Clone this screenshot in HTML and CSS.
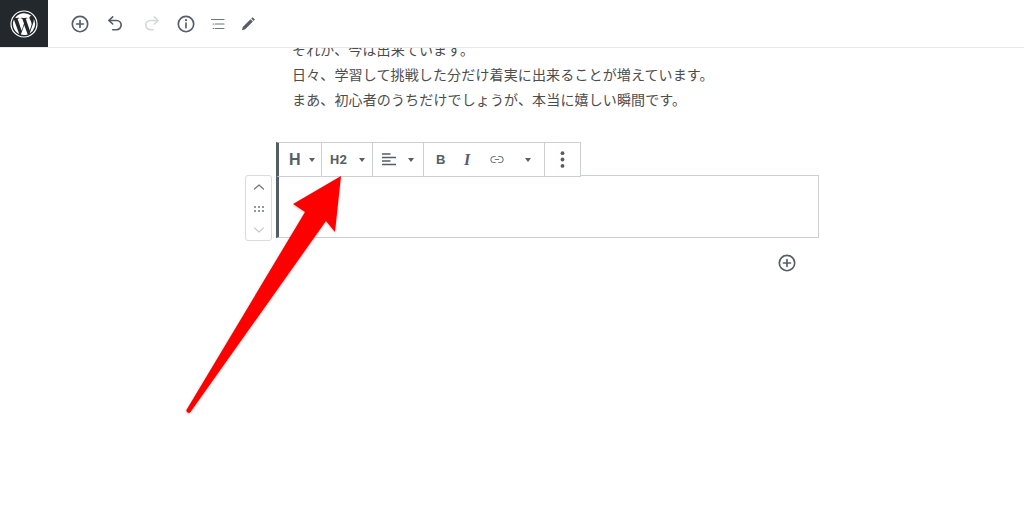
FILE: index.html
```html
<!DOCTYPE html>
<html lang="ja">
<head>
<meta charset="utf-8">
<title>Editor</title>
<link rel="stylesheet" href="styles.css">
</head>
<body>
<header class="topbar">
  <div class="logo">
    <svg viewBox="0 0 28 28" width="28" height="28"><circle cx="14" cy="14" r="13" fill="none" stroke="#fff" stroke-width="1.2"/><path fill="#fff" d="M3 14c0 4.4 2.5 8.100 6.200 9.900L3.900 9.500A11 11 0 0 0 3 14zm18.400-.6c0-1.400-.5-2.300-.9-3-.6-.9-1.100-1.700-1.100-2.600 0-1 .8-2 1.900-2h.1A11 11 0 0 0 5.200 7.900h.7c1.200 0 2.900-.2 2.900-.2.600 0 .7.900.1.900 0 0-.6.100-1.300.1l4 12 2.400-7.300-1.700-4.700c-.6 0-1.200-.1-1.200-.1-.6 0-.5-.9.100-.9 0 0 1.800.2 2.900.2 1.200 0 2.900-.2 2.900-.2.600 0 .7.900.1.900 0 0-.6.100-1.300.1l4 11.800 1.100-3.600c.5-1.500.8-2.500.8-3.500zM14.200 15l-3.300 9.600a11 11 0 0 0 6.800-.2l-.1-.1L14.200 15zm9.500-6.300.1 1.100c0 1.100-.2 2.300-.8 3.900l-3.400 9.700A11 11 0 0 0 23.700 8.700z"/></svg>
  </div>
  <div class="tools">
    <svg class="ico" viewBox="0 0 20 20"><circle cx="10" cy="10" r="7" class="ln"/><path d="M10 6.800v6.400M6.800 10h6.400" class="ln"/></svg>
    <svg class="ico undo" viewBox="0 0 20 20"><path d="M7 3.500 3.500 6.800 7 10" class="ln"/><path d="M4 6.800h6.500a4.200 4.200 0 0 1 0 8.400H7" class="ln"/></svg>
    <svg class="ico off" viewBox="0 0 20 20"><path d="M13 3.500l3.500 3.300L13 10" class="ln"/><path d="M16 6.800H9.500a4.200 4.200 0 0 0 0 8.400H12" class="ln"/></svg>
    <svg class="ico" viewBox="0 0 20 20"><circle cx="10" cy="10" r="7" class="ln"/><path d="M10 9.200v4.300" class="ln"/><circle cx="10" cy="6.500" r="1" class="dot"/></svg>
    <svg class="ico-s" viewBox="0 0 18 18"><path d="M2.500 4.500h12.500M6.500 9H15M6.500 13.500H15" class="thin"/><path d="M4.200 9h.8M4.200 13.500h.8" class="thin"/></svg>
    <svg class="ico-s" viewBox="0 0 18 18"><path class="dot" d="M13.500 2.200l2.400 2.400-1.300 1.300-2.400-2.400zM11.500 4.200l2.400 2.400-7.700 7.700-3.300.9.900-3.300z"/></svg>
  </div>
</header>
<main class="canvas">
  <div class="column">
    <p class="line">それが、今は出来ています。</p>
    <p class="line">日々、学習して挑戦した分だけ着実に出来ることが増えています。</p>
    <p class="line">まあ、初心者のうちだけでしょうが、本当に嬉しい瞬間です。</p>
  </div>
  <section class="block">
    <div class="mover">
      <svg class="mv" viewBox="0 0 12 8"><path d="M1.500 6 6 2l4.500 4" class="thin"/></svg>
      <svg class="grip" viewBox="0 0 10 6"><path class="grip-dot" d="M0 0h2v2H0zM4 0h2v2H4zM8 0h2v2H8zM0 4h2v2H0zM4 4h2v2H4zM8 4h2v2H8z"/></svg>
      <svg class="mv faint" viewBox="0 0 12 8"><path d="M1.500 2 6 6l4.500-4" class="thin"/></svg>
    </div>
    <div class="toolbar">
      <div class="group g-h">
        <span class="big-h">H</span><span class="caret"></span>
      </div>
      <div class="group g-h2">
        <span class="h2">H2</span><span class="caret"></span>
      </div>
      <div class="group g-align">
        <svg class="align" viewBox="0 0 14 13"><path d="M0 1h8M0 4.500h14M0 8h8M0 11.500h14" class="ln" stroke-width="1.700"/></svg><span class="caret"></span>
      </div>
      <div class="group g-format">
        <span class="fmt b">B</span>
        <span class="fmt i">I</span>
        <svg class="link" viewBox="0 0 16 10"><path d="M6 1.500H4.500a3.500 3.500 0 0 0 0 7H6M10 1.500h1.500a3.500 3.500 0 0 1 0 7H10M6 5h4" class="thin"/></svg>
        <span class="caret"></span>
      </div>
      <div class="group g-more">
        <svg class="more" viewBox="0 0 4 16"><circle cx="2" cy="2" r="1.800" class="dot"/><circle cx="2" cy="8" r="1.800" class="dot"/><circle cx="2" cy="14" r="1.800" class="dot"/></svg>
      </div>
    </div>
    <div class="editable"></div>
    <div class="after">
      <svg class="ico" viewBox="0 0 20 20"><circle cx="10" cy="10" r="7" class="ln"/><path d="M10 6.800v6.400M6.800 10h6.400" class="ln"/></svg>
    </div>
  </section>
</main>
<svg class="arrow" viewBox="0 0 1024 528" width="1024" height="528"><path d="M341 176 293 204 305 212 187 409a2.200 2.200 0 0 0 3.500 3L326 221 335 232z"/></svg>
</body>
</html>
```
FILE: styles.css
```css
* { box-sizing: border-box; }
html, body { margin: 0; height: 100%; background: #fff; overflow: hidden; }
body { font-family: "Noto Sans CJK JP", "Liberation Sans", sans-serif; color: #40464d; position: relative; }
.ln { fill: none; stroke: #555d66; stroke-width: 1.500; stroke-linecap: round; stroke-linejoin: round; }
.thin { fill: none; stroke: #6c7781; stroke-width: 1.200; stroke-linecap: round; stroke-linejoin: round; }
.dot { fill: #555d66; }
.grip-dot { fill: #8f98a1; }
.topbar { display: flex; height: 48px; border-bottom: 1px solid #e6e8ea; background: #fff; position: relative; z-index: 2; }
.logo { width: 48px; height: 47px; background: #23282d; display: flex; align-items: center; justify-content: center; }
.tools { display: flex; align-items: center; gap: 13px; padding-left: 21px; }
.ico { width: 22px; height: 22px; display: block; }
.undo { margin-left: 1px; }
.ico-s { width: 18px; height: 18px; display: block; margin-left: -1px; }
.ico.off .ln { stroke: #d5d8db; }
.canvas { display: flex; flex-direction: column; align-items: flex-start; height: 480px; }
.column { margin: -11px 0 0 292px; }
.line { margin: 0; font-size: 14px; line-height: 25px; height: 25px; color: #4c4c4c; white-space: nowrap; letter-spacing: .14px; }
.block { position: relative; margin: 30px 0 0 276px; width: 543px; }
.toolbar { display: flex; width: 305px; height: 35px; border: 1px solid #ccd0d4; border-left: 3px solid #555d66; background: #fff; margin-bottom: -2px; position: relative; z-index: 1; }
.group { display: flex; align-items: center; border-right: 1px solid #ccd0d4; height: 100%; }
.group:last-child { border-right: 0; }
.g-h { width: 43px; padding-left: 10px; }
.g-h2 { width: 51px; padding-left: 8px; }
.g-align { width: 51px; padding-left: 9px; }
.g-format { width: 121px; padding-left: 12px; }
.g-more { flex: 1; justify-content: center; }
.big-h { font: 700 16px "Liberation Sans", sans-serif; color: #555d66; width: 20px; }
.h2 { font: 700 13px "Roboto", sans-serif; color: #555d66; width: 29px; letter-spacing: .2px; }
.caret { width: 0; height: 0; border-left: 3px solid transparent; border-right: 3px solid transparent; border-top: 4px solid #555d66; }
.g-align .caret { margin-left: 12px; }
.align { width: 14px; height: 13px; }
.fmt { font: 700 13px "Liberation Sans", sans-serif; color: #555d66; }
.b { width: 28px; }
.i { width: 26px; font-family: "Liberation Serif", serif; font-style: italic; font-size: 16px; }
.link { width: 14px; height: 9px; }
.g-format .caret { margin-left: 21px; }
.more { width: 5px; height: 17px; }
.editable { height: 63px; border: 1px solid #ccd0d4; border-left: 3px solid #555d66; background: #fff; }
.after { display: flex; justify-content: flex-end; padding: 14px 21px 0 0; }
.mover { position: absolute; left: -31px; top: 33px; width: 27px; height: 66px; border: 1px solid #d8dbdf; border-radius: 3px; display: flex; flex-direction: column; align-items: center; justify-content: space-between; padding: 7px 0 6px; background: #fff; }
.mv { width: 12px; height: 8px; display: block; }
.faint .thin { stroke: #c8ccd0; }
.grip { width: 10px; height: 6px; display: block; }
.arrow { position: absolute; left: 0; top: 0; pointer-events: none; z-index: 3; filter: drop-shadow(0 1px 1px rgba(0,0,0,.25)); }
.arrow path { fill: #fe0000; }
```
